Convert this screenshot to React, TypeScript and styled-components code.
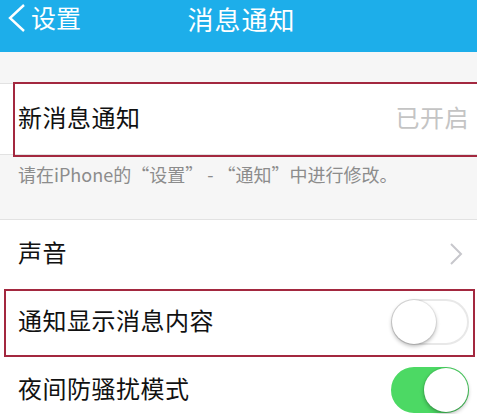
import React from "react";
import styled, { createGlobalStyle } from "styled-components";

const Global = createGlobalStyle`
  html, body { margin: 0; padding: 0; background: #f6f6f6; }
  body { font-family: "Noto Sans CJK SC", "Noto Sans", sans-serif; overflow: hidden; }
  * { box-sizing: border-box; }
`;

const Page = styled.div`
  width: 477px;
  height: 414px;
  overflow: hidden;
  background: #f6f6f6;
  display: flex;
  flex-direction: column;
  & > * { flex-shrink: 0; }
`;

const NavBar = styled.div`
  height: 52px;
  background: #1daeea;
  position: relative;
  display: flex;
  align-items: flex-start;
  justify-content: center;
  color: #fff;
`;

const BackButton = styled.div`
  position: absolute;
  left: 6px;
  top: 4px;
  display: flex;
  align-items: center;
  gap: 3px;
  font-size: 25px;
  line-height: 28px;
  color: #fff;
  & > span { margin-top: -3px; }
`;

const Title = styled.div`
  font-size: 26px;
  line-height: 38px;
  margin-top: 0;
  margin-left: 6px;
  letter-spacing: 1px;
`;

const Spacer = styled.div<{ $h: number }>`
  height: ${(p) => p.$h}px;
`;

const Group = styled.div`
  background: #fff;
  border-top: 1px solid #e2e2e2;
  border-bottom: 1px solid #e2e2e2;
  display: flex;
  flex-direction: column;
`;

const Row = styled.div<{ $h: number; $mark?: "a" | "b" }>`
  position: relative;
  height: ${(p) => p.$h}px;
  flex-shrink: 0;
  display: flex;
  align-items: center;
  justify-content: space-between;
  padding: 0 8px 4px 18px;
  &::after {
    content: "";
    display: ${(p) => (p.$mark ? "block" : "none")};
    position: absolute;
    pointer-events: none;
    border: 2px solid #a3283f;
    ${(p) =>
      p.$mark === "a"
        ? "left: 13px; right: -4px; top: -2px; bottom: -3px;"
        : "left: 4px; right: 2px; top: 1px; bottom: -1px;"}
  }
`;

const Label = styled.div`
  font-size: 24px;
  line-height: 30px;
  color: #111;
  letter-spacing: 0.5px;
`;

const Value = styled.div`
  font-size: 24px;
  line-height: 30px;
  color: #c4c4c4;
  letter-spacing: 0.5px;
`;

const Footnote = styled.div`
  padding: 7px 18px 0;
  font-size: 18px;
  line-height: 24px;
  color: #8c8c8c;
  height: 64px;
`;

const Track = styled.div<{ $on: boolean }>`
  width: 78px;
  height: 46px;
  border-radius: 23px;
  position: relative;
  margin-top: 4px;
  background: ${(p) => (p.$on ? "#4cd964" : "#fff")};
  border: 2px solid ${(p) => (p.$on ? "#4cd964" : "#e8e8e8")};
  flex-shrink: 0;
`;

const Knob = styled.div<{ $on: boolean }>`
  position: absolute;
  top: -1px;
  ${(p) => (p.$on ? "right: -1px;" : "left: -1px;")}
  width: 44px;
  height: 44px;
  border-radius: 50%;
  background: #fff;
  box-shadow: 0 2px 4px rgba(0, 0, 0, 0.3), 0 0 0 1px rgba(0, 0, 0, 0.06);
`;

const Toggle = ({ on }: { on: boolean }) => (
  <Track $on={on}>
    <Knob $on={on} />
  </Track>
);

const Chevron = () => (
  <svg width="14" height="22" viewBox="0 0 14 22" style={{ marginRight: 6, marginTop: 4 }}>
    <path d="M2 1 L12 11 L2 21" fill="none" stroke="#c7c7cc" strokeWidth="2" />
  </svg>
);

export default function App() {
  return (
    <Page>
      <Global />
      <NavBar>
        <BackButton>
          <svg width="22" height="28" viewBox="0 0 22 28">
            <path d="M18 1 L4 14 L18 27" fill="none" stroke="#fff" strokeWidth="2.4" />
          </svg>
          <span>设置</span>
        </BackButton>
        <Title>消息通知</Title>
      </NavBar>
      <Spacer $h={31} />
      <Group>
        <Row $h={70} $mark="a">
          <Label>新消息通知</Label>
          <Value>已开启</Value>
        </Row>
      </Group>
      <Footnote>请在iPhone的“设置” - “通知”中进行修改。</Footnote>
      <Group>
        <Row $h={68}>
          <Label>声音</Label>
          <Chevron />
        </Row>
        <Row $h={68} $mark="b">
          <Label>通知显示消息内容</Label>
          <Toggle on={false} />
        </Row>
        <Row $h={68}>
          <Label>夜间防骚扰模式</Label>
          <Toggle on={true} />
        </Row>
      </Group>
    </Page>
  );
}
